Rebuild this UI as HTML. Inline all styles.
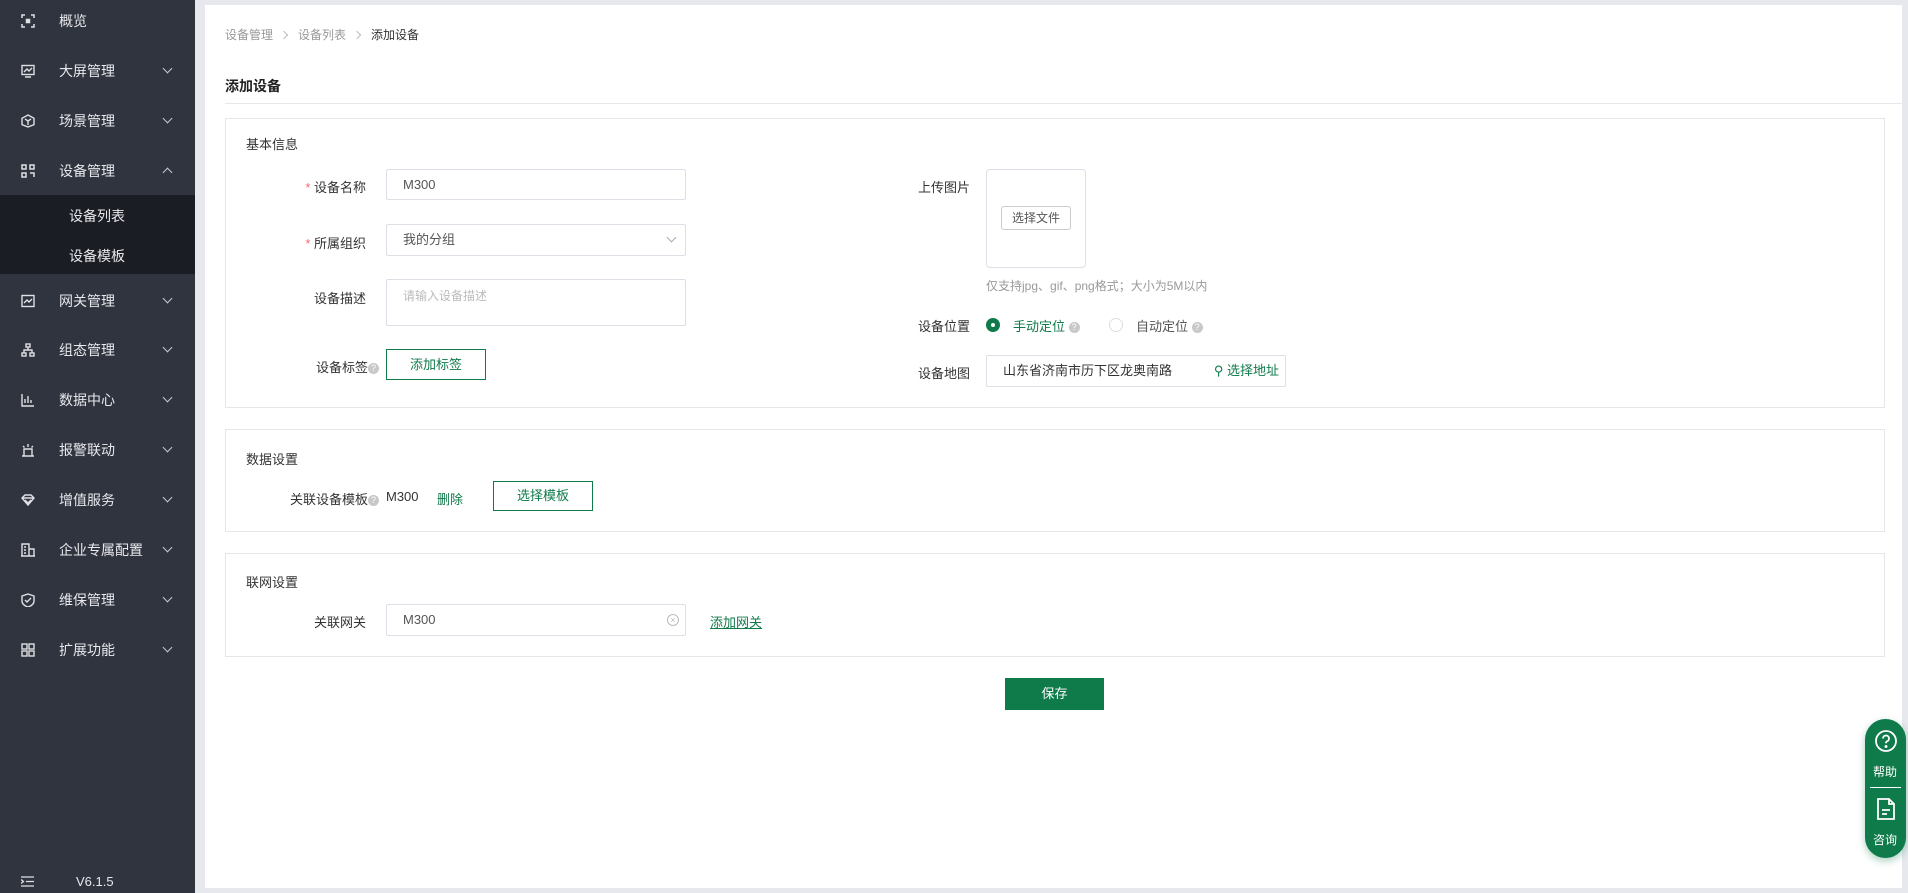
<!DOCTYPE html><html><head><meta charset="utf-8"><style>
*{box-sizing:border-box;margin:0;padding:0}
body{width:1908px;height:893px;background:#e6e8ee;font-family:"Liberation Sans","Noto Sans CJK SC",sans-serif;font-size:13px;color:#333;position:relative;overflow:hidden}
.a{position:absolute;white-space:nowrap}
#sb{left:0;top:0;width:195px;height:893px;background:#30343f}
.mi{position:absolute;left:0;width:195px;height:40px;color:#e8e8ec;font-size:14px;line-height:40px}
.mi .t{position:absolute;left:59px}
.mi .ic{position:absolute;left:21px;top:13px;width:14px;height:14px}
.mi .ch{position:absolute;left:164px;top:14px;width:7px;height:7px;border-right:1.3px solid #c8cad0;border-bottom:1.3px solid #c8cad0;transform:rotate(45deg)}
.mi .ch.up{top:18px;transform:rotate(-135deg)}
#sub{left:0;top:195px;width:195px;height:79px;background:#1b1d24}
.si{position:absolute;left:69px;color:#e8e8ec;font-size:14px}
#main{left:205px;top:5px;width:1697px;height:883px;background:#fff}
.box{position:absolute;left:225px;width:1660px;border:1px solid #e4e6ea;background:#fff}
.st{position:absolute;left:246px;font-size:13px;color:#333}
.lb{position:absolute;text-align:right;font-size:13px;color:#333;white-space:nowrap}
.in{position:absolute;border:1px solid #dcdfe6;border-radius:2px;background:#fff;font-size:13px;padding-left:16px;color:#555;white-space:nowrap}
.q{display:inline-block;width:11px;height:11px;border-radius:50%;background:#c8c8c8;color:#fff;font-size:9px;line-height:11px;text-align:center;vertical-align:middle}
.gb{position:absolute;border:1px solid #0f7a4a;color:#0f7a4a;text-align:center;font-size:13px;background:#fff}
.g{color:#0f7a4a}
.red{color:#f56c6c}
.sep{display:inline-block;width:6px;height:6px;border-right:1px solid #bbb;border-top:1px solid #bbb;transform:rotate(45deg);margin:0 11px 1px 8px}
</style></head><body>
<div id="sb" class="a">
 <div class="mi" style="top:1px"><svg class="ic" viewBox="0 0 14 14" fill="none" stroke="#dfe0e4" stroke-width="1.5"><path d="M1 4V1h3M10 1h3v3M13 10v3h-3M4 13H1v-3"/><rect x="5.5" y="5.5" width="3" height="3" fill="#dfe0e4"/></svg><span class="t">概览</span></div>
 <div class="mi" style="top:51px"><svg class="ic" viewBox="0 0 14 14" fill="none" stroke="#dfe0e4" stroke-width="1.4"><rect x="1" y="1.5" width="12" height="9"/><path d="M3 8l3-3 2 2 3-3M4 13h6"/></svg><span class="t">大屏管理</span><i class="ch"></i></div>
 <div class="mi" style="top:101px"><svg class="ic" viewBox="0 0 14 14" fill="none" stroke="#dfe0e4" stroke-width="1.4"><path d="M7 1l6 3.3v6.4L7 13 1 10.7V4.3z"/><path d="M4 5l3 2 3-2M7 7v4"/></svg><span class="t">场景管理</span><i class="ch"></i></div>
 <div class="mi" style="top:151px"><svg class="ic" viewBox="0 0 14 14" fill="none" stroke="#dfe0e4" stroke-width="1.5"><rect x="1" y="1" width="4" height="4"/><rect x="9" y="1" width="4" height="4"/><rect x="1" y="9" width="4" height="4"/><path d="M9 9h4v4"/></svg><span class="t">设备管理</span><i class="ch up"></i></div>
 <div id="sub" class="a"><span class="si" style="top:11px">设备列表</span><span class="si" style="top:51px">设备模板</span></div>
 <div class="mi" style="top:281px"><svg class="ic" viewBox="0 0 14 14" fill="none" stroke="#dfe0e4" stroke-width="1.4"><rect x="1" y="1.5" width="12" height="11"/><path d="M3 9l3-3 2 2 3-3"/></svg><span class="t">网关管理</span><i class="ch"></i></div>
 <div class="mi" style="top:330px"><svg class="ic" viewBox="0 0 14 14" fill="none" stroke="#dfe0e4" stroke-width="1.4"><rect x="5" y="1" width="4" height="3"/><rect x="1" y="10" width="4" height="3"/><rect x="9" y="10" width="4" height="3"/><path d="M7 4v3M3 10V7h8v3"/></svg><span class="t">组态管理</span><i class="ch"></i></div>
 <div class="mi" style="top:380px"><svg class="ic" viewBox="0 0 14 14" fill="none" stroke="#dfe0e4" stroke-width="1.4"><path d="M1 1v12h12M4 10V6M7 10V3M10 10V7"/></svg><span class="t">数据中心</span><i class="ch"></i></div>
 <div class="mi" style="top:430px"><svg class="ic" viewBox="0 0 14 14" fill="none" stroke="#dfe0e4" stroke-width="1.4"><path d="M1 13h12M3 13V6h8v7M7 1v3M2 3l1.5 1.5M12 3l-1.5 1.5"/></svg><span class="t">报警联动</span><i class="ch"></i></div>
 <div class="mi" style="top:480px"><svg class="ic" viewBox="0 0 14 14" fill="none" stroke="#dfe0e4" stroke-width="1.4"><path d="M1 5l3-3h6l3 3-6 7z M1 5h12M4 7l3 3 3-3"/></svg><span class="t">增值服务</span><i class="ch"></i></div>
 <div class="mi" style="top:530px"><svg class="ic" viewBox="0 0 14 14" fill="none" stroke="#dfe0e4" stroke-width="1.4"><path d="M1 13V1h7v12M8 6h5v7M0 13h14M3 4h2M3 7h2M3 10h2"/></svg><span class="t">企业专属配置</span><i class="ch"></i></div>
 <div class="mi" style="top:580px"><svg class="ic" viewBox="0 0 14 14" fill="none" stroke="#dfe0e4" stroke-width="1.4"><path d="M7 1l6 2v5c0 3-3 5-6 6-3-1-6-3-6-6V3z"/><path d="M4 7l2 2 4-4"/></svg><span class="t">维保管理</span><i class="ch"></i></div>
 <div class="mi" style="top:630px"><svg class="ic" viewBox="0 0 14 14" fill="none" stroke="#dfe0e4" stroke-width="1.4"><rect x="1" y="1" width="5" height="5"/><rect x="8" y="1" width="5" height="5"/><rect x="1" y="8" width="5" height="5"/><rect x="8" y="8" width="5" height="5"/></svg><span class="t">扩展功能</span><i class="ch"></i></div>
 <svg class="a" style="left:21px;top:876px" width="13" height="11" viewBox="0 0 13 11" stroke="#dfe0e4" stroke-width="1.3"><path d="M0 1h13M5 5.5h8M0 10h13M0 3.5l2.5 2L0 7.5" fill="none"/></svg>
 <span class="a" style="left:76px;top:874px;color:#e8e8ec;font-size:13px">V6.1.5</span>
</div>
<div id="main" class="a"></div>
<div class="a" style="left:225px;top:26px;font-size:12px;color:#999">设备管理<i class="sep"></i>设备列表<i class="sep"></i><span style="color:#333">添加设备</span></div>
<div class="a" style="left:225px;top:76px;font-size:14px;font-weight:bold;color:#222">添加设备</div>
<div class="a" style="left:225px;top:103px;width:1677px;height:1px;background:#e8e8ec"></div>

<div class="box" style="top:118px;height:290px"></div>
<div class="st" style="top:134px">基本信息</div>
<div class="lb" style="right:1542px;top:177px"><span class="red">* </span>设备名称</div>
<div class="in" style="left:386px;top:169px;width:300px;height:31px;line-height:29px">M300</div>
<div class="lb" style="right:1542px;top:233px"><span class="red">* </span>所属组织</div>
<div class="in" style="left:386px;top:224px;width:300px;height:32px;line-height:30px">我的分组<span style="position:absolute;right:10px;top:9px;width:7px;height:7px;border-right:1px solid #aaa;border-bottom:1px solid #aaa;transform:rotate(45deg)"></span></div>
<div class="lb" style="right:1542px;top:288px">设备描述</div>
<div class="in" style="left:386px;top:279px;width:300px;height:47px;padding-top:7px;color:#bbb;font-size:12px">请输入设备描述</div>
<div class="lb" style="right:1529px;top:357px">设备标签<span class="q">?</span></div>
<div class="gb" style="left:386px;top:349px;width:100px;height:31px;line-height:29px">添加标签</div>

<div class="a" style="left:918px;top:177px">上传图片</div>
<div class="a" style="left:986px;top:169px;width:100px;height:99px;border:1px solid #dcdfe6;border-radius:4px"></div>
<div class="a" style="left:1001px;top:206px;width:70px;height:24px;border:1px solid #ccc;border-radius:3px;text-align:center;line-height:22px;font-size:12px;color:#555">选择文件</div>
<div class="a" style="left:986px;top:277px;font-size:12px;color:#999">仅支持jpg、gif、png格式；大小为5M以内</div>
<div class="a" style="left:918px;top:316px">设备位置</div>
<div class="a" style="left:986px;top:318px;width:14px;height:14px;border-radius:50%;background:#0f7a4a"><div style="position:absolute;left:5px;top:5px;width:4px;height:4px;background:#fff;border-radius:50%"></div></div>
<div class="a g" style="left:1013px;top:316px">手动定位 <span class="q">?</span></div>
<div class="a" style="left:1109px;top:318px;width:14px;height:14px;border-radius:50%;border:1px solid #ddd"></div>
<div class="a" style="left:1136px;top:316px;color:#555">自动定位 <span class="q">?</span></div>
<div class="a" style="left:918px;top:363px">设备地图</div>
<div class="in" style="left:986px;top:355px;width:300px;height:32px;line-height:30px;color:#333;padding-left:16px">山东省济南市历下区龙奥南路<span class="g" style="position:absolute;right:6px">⚲ 选择地址</span></div>

<div class="box" style="top:429px;height:103px"></div>
<div class="st" style="top:449px">数据设置</div>
<div class="lb" style="right:1529px;top:489px">关联设备模板<span class="q">?</span></div>
<div class="a" style="left:386px;top:489px">M300</div>
<div class="a g" style="left:437px;top:489px">删除</div>
<div class="gb" style="left:493px;top:481px;width:100px;height:30px;line-height:28px">选择模板</div>

<div class="box" style="top:553px;height:104px"></div>
<div class="st" style="top:572px">联网设置</div>
<div class="lb" style="right:1542px;top:612px">关联网关</div>
<div class="in" style="left:386px;top:604px;width:300px;height:32px;line-height:30px">M300<span style="position:absolute;right:6px;top:9px;width:12px;height:12px;border:1px solid #bbb;border-radius:50%;font-size:9px;line-height:10px;text-align:center;color:#bbb">×</span></div>
<div class="a g" style="left:710px;top:612px;text-decoration:underline">添加网关</div>

<div class="a" style="left:1005px;top:678px;width:99px;height:32px;background:#0f7a4a;color:#fff;text-align:center;line-height:32px;font-size:13px">保存</div>

<div class="a" style="left:1865px;top:719px;width:41px;height:139px;border-radius:21px;background:#0f7a4a;box-shadow:0 3px 8px rgba(15,122,74,.35)"></div>
<svg class="a" style="left:1874px;top:729px" width="24" height="24" viewBox="0 0 24 24" fill="none" stroke="#fff" stroke-width="1.8"><circle cx="12" cy="12" r="10"/><path d="M9 9.5a3 3 0 1 1 4 2.8c-.8.4-1 1-1 2"/><circle cx="12" cy="17.5" r=".6" fill="#fff"/></svg>
<div class="a" style="left:1873px;top:763px;color:#fff;font-size:12px">帮助</div>
<div class="a" style="left:1870px;top:787px;width:31px;height:1px;background:#fff"></div>
<svg class="a" style="left:1876px;top:797px" width="20" height="24" viewBox="0 0 20 24" fill="none" stroke="#fff" stroke-width="1.8"><path d="M2 2h11l5 5v15H2z M13 2v5h5M6 13h8M6 17h5"/></svg>
<div class="a" style="left:1873px;top:831px;color:#fff;font-size:12px">咨询</div>
</body></html>
